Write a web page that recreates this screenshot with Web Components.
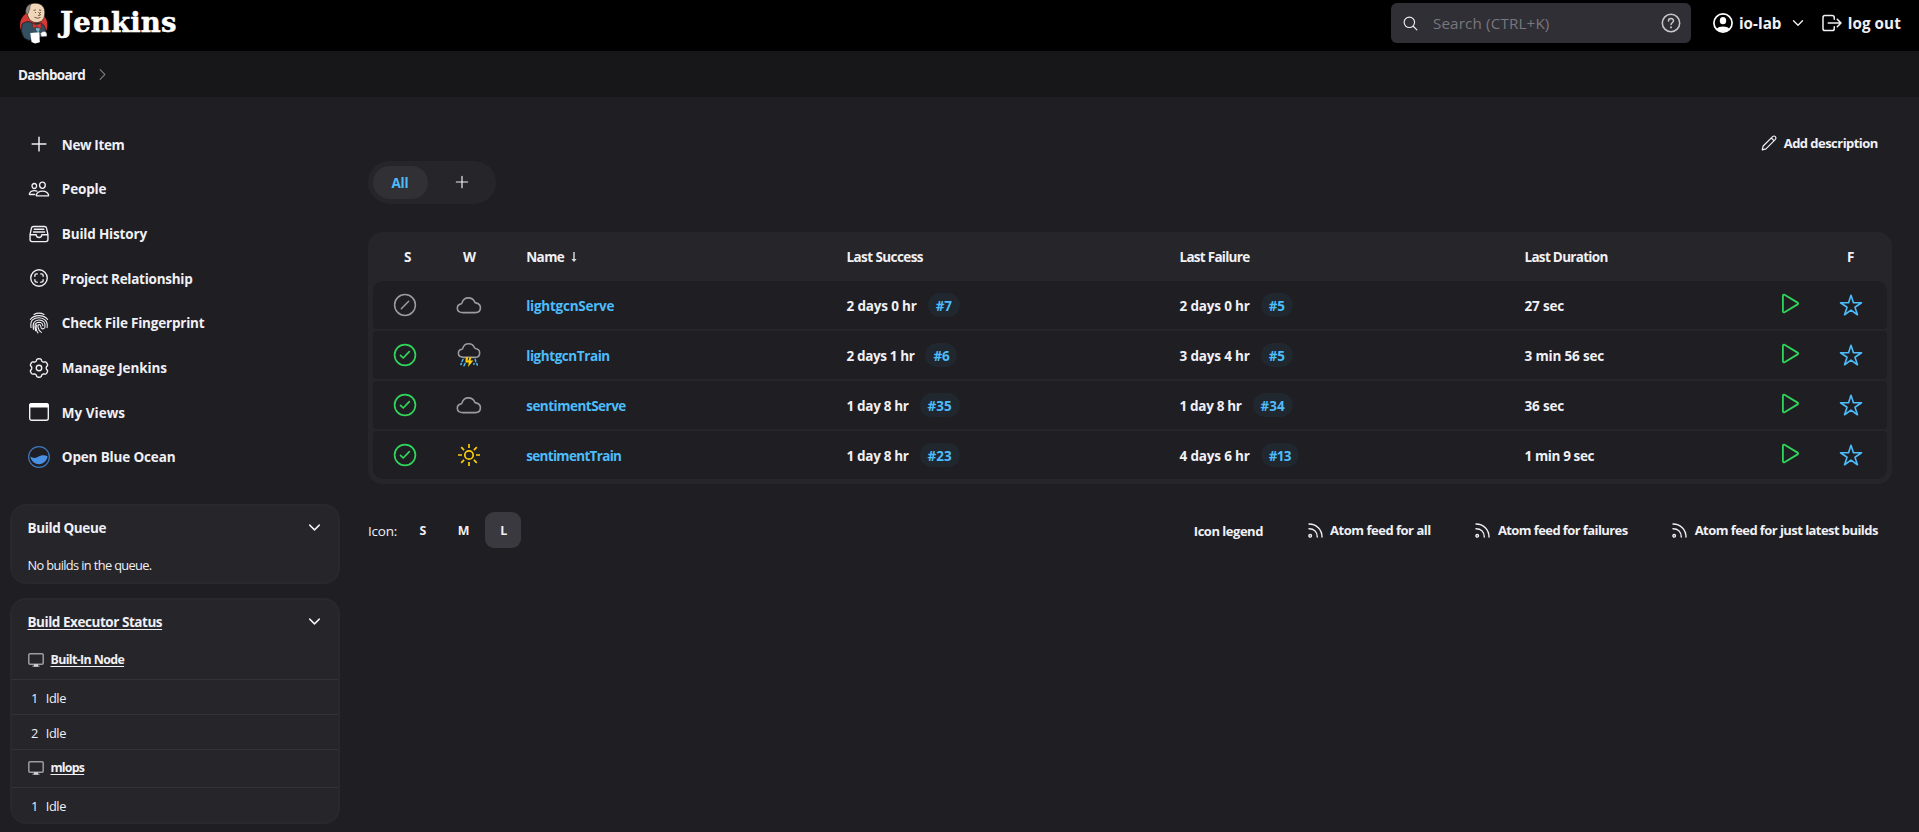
<!DOCTYPE html>
<html lang="en">
<head>
<meta charset="utf-8">
<title>Dashboard [Jenkins]</title>
<style>
html,body{margin:0;height:100%;background:#1f1e23;overflow:hidden}
body{font-family:"Open Sans","Noto Sans",sans-serif;font-weight:700;font-size:13.5px;line-height:20px;color:#f0f0f5}
</style>
</head>
<body>
<jenkins-page></jenkins-page>
<script>
const define=(name,css,html,init)=>customElements.define(name,class extends HTMLElement{
  constructor(){super();this.attachShadow({mode:'open'})}
  connectedCallback(){
    if(this.ready)return;this.ready=true;
    this.shadowRoot.innerHTML='<style>'+css+'</style>'+(typeof html==='function'?html(this):html);
    if(init)init(this);
  }
});

/* Gear outline: six flat-topped lobes round a centre of 12,12. */
const gear=(()=>{let p='';for(let i=0;i<120;i++){const a=i/120*2*Math.PI,c=Math.cos(6*(a-Math.PI/2));
  const r=8.95+1.1*Math.tanh(2.2*(c+.25));p+=(i?'L':'M')+(12+r*Math.cos(a)).toFixed(2)+' '+(12+r*Math.sin(a)).toFixed(2)}return p+'Z'})();

const L='fill="none" stroke="currentColor" stroke-linecap="round" stroke-linejoin="round"';
const ion=(d,w=32,extra='')=>['0 0 512 512',`<g ${L} stroke-width="${w}"><path d="${d}"/>${extra}</g>`];
const cloud='M7 15.6C3.9 15.6 1.3 14.3 1.3 11.3C1.3 8.9 2.9 7.3 5 6.9Q5.8 6.7 6 5.9C6.9 2.8 9.4.9 12.4.9C15.4.9 17.7 2.5 18.8 5.1Q19.1 5.8 19.9 5.9C22.5 6.4 24.4 8 24.4 10.8C24.4 13.8 22.3 15.6 19.5 15.6Z';
const ICONS={
  plus:ion('M256 96v320M96 256h320',34),
  people:ion('M402 168c-2.93 40.67-33.1 72-66 72s-63.12-31.32-66-72c-3-42.31 26.37-72 66-72s69 30.46 66 72zM336 304c-65.17 0-127.84 32.37-143.54 95.41-2.08 8.34 3.15 16.59 11.72 16.59h263.65c8.57 0 13.77-8.25 11.72-16.59C463.85 335.36 401.18 304 336 304zM200 185.94c-2.34 32.48-26.72 58.06-53 58.06s-50.7-25.57-53-58.06C91.61 152.15 115.34 128 147 128s55.39 24.77 53 57.94zM206 306c-18.05-8.27-37.93-11.45-59-11.45-52 0-102.1 25.85-114.65 76.2-1.65 6.66 2.53 13.25 9.37 13.25H154'),
  tray:ion('M384 80H128c-26 0-43 14-48 40L48 272v112a48.14 48.14 0 0048 48h320a48.14 48.14 0 0048-48V272l-32-152c-5-27-23-40-48-40zM48 272h144M320 272h144M192 272a64 64 0 00128 0M144 144h224M128 208h256'),
  scan:ion('M448 256c0-106-86-192-192-192S64 150 64 256s86 192 192 192 192-86 192-192zM296 352h16a40 40 0 0040-40v-16M352 216v-16a40 40 0 00-40-40h-16M216 352h-16a40 40 0 01-40-40v-16M160 216v-16a40 40 0 0140-40h16'),
  finger:['0 0 24 24',`<g ${L} stroke-width="1.2"><path d="M6.500 2.700C9.500 1.100 14.500 1.100 17.500 2.700M2.600 8.200C6.800 2.600 17.200 2.600 21.400 8.200M3.300 17C1.800 8.500 7 6.200 12 6.200S22.200 9.500 20.800 17M6 19C4.300 12 7.500 8.700 12 8.700S19.700 12 18.500 16.500Q17.500 19 15.300 18.200C13 17.300 15 13.800 12.400 13.600C9.800 13.500 10.500 19.800 14.600 22.200M8.300 20.500C6.600 15 7.500 11.100 12 11.100Q16 11.300 16.200 15M10.900 22.800C8.500 19.500 8.300 15.500 9.700 14"/></g>`],
  gear:['0 0 24 24',`<g ${L} stroke-width="1.5"><path d="${gear}"/><circle cx="12" cy="12" r="3"/></g>`],
  window:['0 0 22 22',`<rect x="1.7" y="2.700" width="18.600" height="16.600" rx="2" ${L} stroke-width="1.400"/><path d="M1 6.500V5Q1 2 4 2H18Q21 2 21 5V6.500Z" fill="#fff"/>`],
  ocean:['0 0 24 24','<circle cx="12" cy="12" r="11.300" fill="none" stroke="#3f78bd" stroke-width="1.300"/><path d="M2.600 11.500C5 13.400 7.500 13.700 10.500 12C14 10 18 9.500 21.400 11.300A9.500 9.500 0 0 1 2.600 12Z" fill="#4a90e2"/>'],
  search:ion('M221.09 64a157.09 157.09 0 10157.09 157.09A157.1 157.1 0 00221.090 64zM338.290 338.290L448 448',34),
  user:['0 0 20 20','<circle cx="10" cy="10" r="9.100" fill="none" stroke="#fff" stroke-width="1.700"/><ellipse cx="10" cy="7.700" rx="3.200" ry="3.600" fill="#fff"/><path d="M3.500 16C5.500 12.700 14.500 12.700 16.500 16A9 9 0 0 1 3.500 16Z" fill="#fff"/>'],
  down:ion('M112 184l144 144 144-144',44),
  right:ion('M184 112l144 144-144 144',34),
  logout:ion('M304 336v40a40 40 0 01-40 40H104a40 40 0 01-40-40V136a40 40 0 0140-40h152c22.090 0 48 17.910 48 40v40M368 336l80-80-80-80M176 256h256',32),
  pencil:['0 0 16 16',`<path d="M1.200 14.800L2.200 11L11.600 1.600Q13 .4 14.400 1.600Q15.600 3 14.400 4.400L5 13.800ZM10.300 3L13 5.700" ${L} stroke-width="1.200"/>`],
  star:['0 0 512 512','<path d="M480 208H308L256 48l-52 160H32l140 96-54 160 138-100 138 100-54-160z" fill="none" stroke="#4dbcfa" stroke-width="34" stroke-linejoin="round"/>'],
  play:['0 0 512 512','<path d="M112 111v290c0 17.440 17 28.520 31 20.160l247.900-148.370c12.120-7.250 12.120-26.330 0-33.580L143 90.840c-14-8.360-31 2.720-31 20.160z" fill="none" stroke="#30d65b" stroke-width="34"/>'],
  off:['0 0 24 24','<g fill="none" stroke="#9b9ba1" stroke-width="1.500" stroke-linecap="round"><circle cx="12" cy="12" r="10.400"/><path d="M8.300 15.700L15.700 8.300"/></g>'],
  ok:['0 0 24 24','<g fill="none" stroke="#30d65b" stroke-width="1.700" stroke-linecap="round" stroke-linejoin="round"><circle cx="12" cy="12" r="10.400"/><path d="M7.500 12.400L10.200 15L16.300 8.600"/></g>'],
  cloudy:['0 0 26 26',`<path transform="translate(0 5)" d="${cloud}" fill="none" stroke="#9b9ba1" stroke-width="1.600"/>`],
  storm:['0 0 26 26',`<path transform="translate(1.200 1) scale(.92)" d="${cloud}" fill="none" stroke="#9b9ba1" stroke-width="1.700"/><path d="M9.900 15.200H15.300L14.500 18.600H17.400L12 25L12.800 20.400H9.300Z" fill="#fccf08"/><path d="M12.800 15.500L12 18.500" stroke="#1f1e23"/><path d="M7 17.500L6 19.500M5.500 21.500L4.800 22.500M9 21.500L8 23.700M19.300 17.500L19.700 19.500M20.800 21.500L21.300 23M18 21.500L17.800 22.300" stroke="#4dbcfa" stroke-width="1.500" stroke-linecap="round"/>`],
  sun:['0 0 26 26','<g fill="none" stroke="#f8cc10" stroke-width="1.700"><circle cx="13" cy="13" r="4.200"/><path d="M13 2v4M13 20v4M2 13h4M20 13h4M5.200 5.200l2.900 2.900M17.900 17.900l2.900 2.900M5.200 20.800l2.900-2.900M17.900 8.100l2.900-2.900"/></g>'],
  monitor:['0 0 16 14','<rect x=".8" y=".8" width="14.400" height="10.400" rx="1.200" fill="none" stroke="#9c9ca1" stroke-width="1.500"/><path d="M4.500 12.500H11.500V14H4.500Z" fill="#8c8c91"/><path d="M6 11.300H10V13.500H6Z" fill="#d8d8dc"/>'],
  arrow:['0 0 6 10','<path d="M2.300 0H3.700V7H5.600L3 10L.4 7H2.300Z" fill="#ddd"/>'],
  rss:['0 0 15 15',`<g ${L} stroke-width="1.400"><path d="M1 1C8.500 1 14 6.500 14 14M1 5.700C6 5.700 9.300 9 9.300 14"/><circle cx="2.200" cy="12.800" r="1.300"/></g>`],
  help:['0 0 20 20',`<g ${L} style="stroke:#c8c8cc" stroke-width="1.500"><circle cx="10" cy="10" r="8.700"/><path d="M7.500 8C7.500 4.800 12.500 4.800 12.500 7.800C12.500 9.700 10 9.800 10 11.500"/><path stroke-width="1.900" d="M10 14.300v.1"/></g>`],
  logo:['0 0 30 42','<circle cx="14.700" cy="23" r="13.700" fill="#d33833"/><path d="M3 22Q6 19.500 10 19.500L15 22L21 21Q25.500 22 26.500 28L26 33L20 35.500L10 38.500L5 36Q1 30 3 22Z" fill="#335061" stroke="#171a20" stroke-width=".8"/><path d="M7.500 8C8 3 12 1 17 1.200C23 1.500 26 5.500 25.800 11C25.600 17 23 20.500 17.500 20.500C12.500 20.500 10 17.500 8.700 13.500Z" fill="#f0d6b7" stroke="#282522" stroke-width=".7"/><path d="M7 12C6 7 8 3 12 2Q10.500 4.500 10.700 7.500Q9.500 8.500 9.500 11Q8.700 12.600 7 12Z" fill="#8e8a85" stroke="#35322f" stroke-width=".5"/><path d="M14.500 8.500l2.300-.7M20 8l2.300.3M16 10.500h1M21 10.500h1M19.500 10L21.500 13L19 13.700M15.500 15.300Q18.500 17 21.500 15.500" fill="none" stroke="#4d3a2e" stroke-width=".8"/><path d="M13.500 21.300L17.500 23.200L22 21V26.800L17.500 24.800L14 26.500Z" fill="#d33833" stroke="#5b1a18" stroke-width=".4"/><path d="M17 26l4 .4-1.500 4-2.500-2.500z" fill="#81b0c4"/><path d="M11.300 31L20.300 30.300L20.800 40.200L16 41.600L12.500 40Z" fill="#fff"/><path d="M21.500 31.500Q23.500 29 26 29.500Q28.500 31 27.800 34.300L22.500 34.700Z" fill="#fbfbfb" stroke="#555" stroke-width=".4"/>']
};

define('j-icon',':host{display:block;flex:none}svg{display:block;width:100%;height:100%;overflow:visible}',el=>{
  const s=el.getAttribute('size').split(' ');el.style.width=s[0]+'px';el.style.height=(s[1]||s[0])+'px';
  const [vb,body]=ICONS[el.getAttribute('name')];return `<svg viewBox="${vb}">${body}</svg>`});

/* Text run whose tracking is tuned to a given width. */
define('j-text',':host{display:block;white-space:nowrap;flex:none}span{display:inline-block}:host([link]) span{text-decoration:underline;text-decoration-thickness:1px;text-underline-offset:2px;text-decoration-skip-ink:none}','<span><slot></slot></span>',el=>{
  const w=parseFloat(el.getAttribute('w')),s=el.shadowRoot.querySelector('span');
  const nat=s.getBoundingClientRect().width;
  s.style.letterSpacing=((w+.6-nat)/el.textContent.length).toFixed(3)+'px';el.style.width=w+1.8+'px'});

define('j-header',`
:host{display:flex;height:51px;background:#000;box-sizing:border-box;padding:0 17px 0 19px}
.logo{margin-top:1.500px}
.name{font:bold 27.5px/36px "DejaVu Serif",serif;color:#fff;margin:3.500px 0 0 11px;-webkit-text-stroke:.5px #fff}
.box{display:flex;align-items:center;box-sizing:border-box;width:300px;height:40px;margin:3px 22px 0 auto;background:#302f35;border-radius:6px;padding:0 10px 0 11px}
.ph{font-size:15.2px;font-weight:400;color:#78777d;margin-left:14px;flex:1}
.u{display:flex;height:46px;align-items:center;font-size:15.2px}`,`
<j-icon class="logo" name="logo" size="30 42"></j-icon><j-text class="name" w="116">Jenkins</j-text>
<div class="box"><j-icon name="search" size="17"></j-icon><j-text class="ph" w="116">Search (CTRL+K)</j-text><j-icon name="help" size="20"></j-icon></div>
<div class="u"><j-icon name="user" size="20"></j-icon><j-text style="margin-left:6px" w="42">io-lab</j-text><j-icon style="margin-left:7px" name="down" size="16"></j-icon>
<j-icon style="margin-left:14px" name="logout" size="24"></j-icon><j-text style="margin-left:4px" w="52.5">log out</j-text></div>`);

define('j-crumbs',`:host{display:flex;height:46px;align-items:center;background:#171719;padding-left:18px}j-text{margin-top:2px}j-icon{color:#77777c;margin-left:8px}`,
`<j-text w="66.500">Dashboard</j-text><j-icon name="right" size="17"></j-icon>`);

define('j-task',`:host{display:flex;height:44.650px;align-items:center}.i{width:51px;display:grid;place-items:center;margin:0 -2.700px 0 13.500px}j-text{margin-top:1px}`,
el=>`<div class="i"><j-icon name="${el.getAttribute('icon')}" size="${el.getAttribute('size')||22}"></j-icon></div><j-text w="${el.getAttribute('w')}">${el.getAttribute('label')}</j-text>`);

define('j-pane',`:host{display:block;box-sizing:border-box;margin-left:10px;width:330px;background:#26252a;border:2px solid #29282d;border-radius:16px;overflow:hidden}
header{display:flex;justify-content:space-between;padding:12px 15.500px 0 15.500px;height:32px;box-sizing:border-box}header j-icon{margin-top:.5px}`,
el=>`<header><j-text w="${el.getAttribute('w')}" ${el.hasAttribute('link')?'link':''}>${el.getAttribute('label')}</j-text><j-icon name="down" size="17"></j-icon></header><slot></slot>`);

define('j-node',`:host{display:flex;align-items:center;padding-left:16px;height:37px;box-sizing:border-box;font-size:12.400px}j-text{margin:1px 0 0 6.500px}`,
el=>`<j-icon name="monitor" size="16 14"></j-icon><j-text link w="${el.getAttribute('w')}">${el.getAttribute('label')}</j-text>`);
define('j-exec',`:host{display:flex;height:34px;align-items:center;border-top:1px solid #333237;font-size:12.800px;font-weight:500;padding-left:19px}j-text{margin-top:1px}j-text+j-text{margin-left:6.500px}`,
el=>`<j-text w="6.500">${el.getAttribute('n')}</j-text><j-text w="19.500">Idle</j-text>`);

define('j-tabs',`:host{display:flex;width:128px;height:43px;box-sizing:border-box;padding:5px;border-radius:22px;background:#26252a}
.a{width:55px;height:33px;border-radius:17px;background:#313035;color:#4dbcfa;display:grid;place-items:center}.a j-text{margin-top:1px}.p{flex:1;display:grid;place-items:center;padding-left:5px}`,
`<div class="a"><j-text w="16">All</j-text></div><div class="p"><j-icon name="plus" size="18" style="margin-top:-1px"></j-icon></div>`);

const cols='64px 64px 321px 333px 345px 241px 62px 1fr';
define('j-job',`:host{display:grid;grid-template-columns:${cols};height:48px;align-items:center;background:#1f1e23;border-radius:4px}
:host(:first-of-type){border-radius:10px 10px 4px 4px}:host(:last-of-type){border-radius:4px 4px 10px 10px}
.c{justify-self:center}.n{color:#4dbcfa;margin-left:25.200px}.b{display:flex;align-items:center;margin-left:24.500px}
.k{box-sizing:border-box;height:24px;border-radius:12px;background:#20272e;color:#4dbcfa;padding:2.500px 0 0 8px;margin-left:9.800px}
.n,.t{margin-top:2px}`,el=>{
  const a=el.getAttribute('data').split('|');
  const bd=(t,w,k,kw)=>`<div class="b"><j-text class="t" w="${w}">${t}</j-text><div class="k" style="width:${+kw+16.500}px"><j-text w="${kw}">${k}</j-text></div></div>`;
  return `<j-icon class="c" name="${a[0]}" size="24"></j-icon><j-icon class="c" name="${a[1]}" size="26"></j-icon><j-text class="n" w="${a[3]}">${a[2]}</j-text>${bd(a[4],a[5],a[6],a[7])}${bd(a[8],a[9],a[10],a[11])}<div class="b"><j-text class="t" w="${a[13]}">${a[12]}</j-text></div><j-icon name="play" class="c" size="27" style="margin:-3px 0 0 37px"></j-icon><j-icon name="star" size="24" style="margin-left:36px"></j-icon>`});

define('j-table',`:host{display:block;background:#26252a;border-radius:14px;padding:0 5px 5px;width:1514px}
.h{display:grid;grid-template-columns:${cols};height:49px;align-items:center}.h>*{margin-left:24.500px}.h>:nth-child(1){margin-left:31px}.h>:nth-child(2){margin-left:26px}.h>:nth-child(3){margin-left:25.200px}
.n{display:flex;align-items:center;gap:6px}.rows{display:flex;flex-direction:column;gap:2px}`,
`<div class="h"><j-text w="8">S</j-text><j-text w="13.500">W</j-text><div class="n"><j-text w="37.500">Name</j-text><j-icon name="arrow" size="6 10" style="margin-top:1px"></j-icon></div><j-text w="75.800">Last Success</j-text><j-text w="69.300">Last Failure</j-text><j-text w="82.500">Last Duration</j-text><span></span><j-text style="margin-left:44px" w="7">F</j-text></div>
<div class="rows">
<j-job data="off|cloudy|lightgcnServe|87.500|2 days 0 hr|69.700|#7|15.500|2 days 0 hr|69.700|#5|15.500|27 sec|39"></j-job>
<j-job data="ok|storm|lightgcnTrain|83|2 days 1 hr|67.400|#6|15.500|3 days 4 hr|69.700|#5|15.500|3 min 56 sec|79"></j-job>
<j-job data="ok|cloudy|sentimentServe|99|1 day 8 hr|61.500|#35|23.500|1 day 8 hr|61.500|#34|23.500|36 sec|39"></j-job>
<j-job data="ok|sun|sentimentTrain|94.500|1 day 8 hr|61.500|#23|23.500|4 days 6 hr|69.700|#13|21.500|1 min 9 sec|69"></j-job></div>`);

define('j-footer',`:host{display:flex;align-items:center;width:1511px;height:36px;margin-top:28px;font-size:13px}
.z{width:36px;height:36px;border-radius:9px;display:grid;place-items:center;font-size:12.400px;margin-right:4px}.z j-text{margin:1px 0 0 1.500px}.on{background:#3a3940;margin:0}
.sz{display:flex;margin-left:7px}.r{display:flex;align-items:center;margin-left:auto}.r j-icon{margin:0 7.500px 0 43.500px}`,
`<j-text style="font-weight:500;font-size:13.500px;margin-top:2px" w="28.500">Icon:</j-text>
<div class="sz"><div class="z"><j-text w="7.500">S</j-text></div><div class="z"><j-text w="11">M</j-text></div><div class="z on"><j-text w="6">L</j-text></div></div>
<div class="r"><j-text style="margin-top:2px" w="68.500">Icon legend</j-text><j-icon name="rss" size="15"></j-icon><j-text w="100">Atom feed for all</j-text><j-icon name="rss" size="15"></j-icon><j-text w="129">Atom feed for failures</j-text><j-icon name="rss" size="15"></j-icon><j-text w="182.500">Atom feed for just latest builds</j-text></div>`);

define('jenkins-page',`:host{display:block}
main{display:grid;grid-template-columns:368px 1fr;height:735px}
aside{padding-top:25px;display:flex;flex-direction:column}
.q{font-size:12.800px;font-weight:500;padding:17px 0 0 15.500px}
.d{display:flex;align-items:center;justify-content:flex-end;height:64px;padding-top:28px;box-sizing:border-box;padding-right:40px;font-size:13px;gap:7px}
j-tabs{margin-bottom:28px}`,`
<j-header></j-header><j-crumbs></j-crumbs>
<main><aside>
<j-task icon="plus" label="New Item" w="62"></j-task>
<j-task icon="people" label="People" w="44"></j-task>
<j-task icon="tray" label="Build History" w="84.500"></j-task>
<j-task icon="scan" label="Project Relationship" w="130"></j-task>
<j-task icon="finger" label="Check File Fingerprint" w="142"></j-task>
<j-task icon="gear" label="Manage Jenkins" w="104.500"></j-task>
<j-task icon="window" label="My Views" w="62.500"></j-task>
<j-task icon="ocean" label="Open Blue Ocean" w="113"></j-task>
<j-pane label="Build Queue" w="78" style="height:80px;margin-top:25px"><div class="q"><j-text w="123.500">No builds in the queue.</j-text></div></j-pane>
<j-pane label="Build Executor Status" link w="134" style="height:226px;margin-top:14px">
<j-node label="Built-In Node" w="73" style="height:47px;padding-top:8px"></j-node><j-exec n="1"></j-exec><j-exec n="2"></j-exec>
<j-node label="mlops" w="33" style="height:38px;border-top:1px solid #333237;padding-bottom:2px"></j-node><j-exec n="1"></j-exec></j-pane>
</aside><section>
<div class="d"><j-icon name="pencil" size="16"></j-icon><j-text w="93.500">Add description</j-text></div>
<j-tabs></j-tabs><j-table></j-table><j-footer></j-footer>
</section></main>`);
</script>
</body>
</html>
